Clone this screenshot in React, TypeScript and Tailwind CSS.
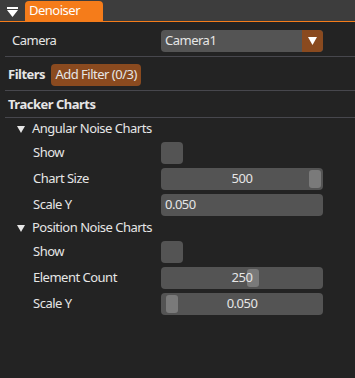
import { ReactNode } from 'react';

const label = 'text-[#e6e6e6]';

function Separator() {
  return <div className="ml-[5px] h-px bg-[#47474d]" />;
}

function TreeNode({ title }: { title: string }) {
  return (
    <div className="mt-[3px] mb-[5px] flex h-[16px] items-center pl-[17px]">
      <svg width="8" height="7" viewBox="0 0 8 7" className="mr-[7px]">
        <polygon points="0,0 8,0 4,7" fill="#e6e6e6" />
      </svg>
      <span className={label}>{title}</span>
    </div>
  );
}

function Row({ name, children }: { name: string; children: ReactNode }) {
  return (
    <div className="mb-[4px] flex h-[22px] items-center">
      <span className={`w-[161px] pl-[33px] ${label}`}>{name}</span>
      {children}
    </div>
  );
}

function Checkbox() {
  return <div className="h-[22px] w-[22px] rounded-[4px] bg-[#545454]" />;
}

function Slider({ value, grab }: { value: string; grab: number }) {
  return (
    <div className="relative flex h-[22px] w-[162px] items-center justify-center rounded-[4px] bg-[#545454]">
      <div
        className="absolute top-[2px] h-[18px] w-[12px] rounded-[3px] bg-[#7a7a7a]"
        style={{ left: grab }}
      />
      <span className={`relative ${label}`}>{value}</span>
    </div>
  );
}

function Input({ value }: { value: string }) {
  return (
    <div className="flex h-[22px] w-[162px] items-center rounded-[4px] bg-[#545454] px-[4px]">
      <span className={label}>{value}</span>
    </div>
  );
}

export default function App() {
  return (
    <div
      className="h-[378px] w-[355px] overflow-hidden bg-[#232323] text-[13px] tracking-[-0.5px]"
      style={{ fontFamily: '"Noto Sans", sans-serif' }}
    >
      <div className="flex h-[21px] items-end bg-[#3d3d3d]">
        <svg width="11" height="10" viewBox="0 0 11 10" className="mb-[4px] ml-[7px]">
          <rect x="0" y="0" width="11" height="2" fill="#ffffff" />
          <polygon points="0,3 11,3 5.5,10" fill="#ffffff" />
        </svg>
        <div className="ml-[7px] flex h-[20px] w-[78px] items-center rounded-t-[4px] bg-[#f57c1a] pl-[4px] text-white">
          Denoiser
        </div>
      </div>
      <div className="h-px bg-[#f57c1a]" />

      <div className="flex items-center pt-[8px] pb-[4px]">
        <span className={`w-[161px] pl-[12px] ${label}`}>Camera</span>
        <div className="flex h-[22px] w-[162px] overflow-hidden rounded-[4px] bg-[#545454]">
          <span className={`flex-1 self-center pl-[4px] ${label}`}>Camera1</span>
          <div className="flex w-[21px] items-center justify-center bg-[#8a4a1f]">
            <svg width="9" height="8" viewBox="0 0 9 8">
              <polygon points="0,0 9,0 4.5,8" fill="#ffffff" />
            </svg>
          </div>
        </div>
      </div>
      <Separator />

      <div className="flex items-center pt-[7px] pb-[4px] pl-[8px]">
        <span className="font-bold text-[#e6e6e6]">Filters</span>
        <div className="ml-[6px] flex h-[22px] w-[90px] items-center justify-center rounded-[4px] bg-[#8a4a1f] text-[#e6e6e6]">
          Add Filter (0/3)
        </div>
      </div>
      <Separator />

      <div className="flex h-[26px] items-center pt-[2px] pl-[8px] font-bold text-[#e6e6e6]">
        Tracker Charts
      </div>
      <Separator />

      <TreeNode title="Angular Noise Charts" />
      <Row name="Show">
        <Checkbox />
      </Row>
      <Row name="Chart Size">
        <Slider value="500" grab={148} />
      </Row>
      <Row name="Scale Y">
        <Input value="0.050" />
      </Row>

      <TreeNode title="Position Noise Charts" />
      <Row name="Show">
        <Checkbox />
      </Row>
      <Row name="Element Count">
        <Slider value="250" grab={86} />
      </Row>
      <Row name="Scale Y">
        <Slider value="0.050" grab={5} />
      </Row>
    </div>
  );
}
